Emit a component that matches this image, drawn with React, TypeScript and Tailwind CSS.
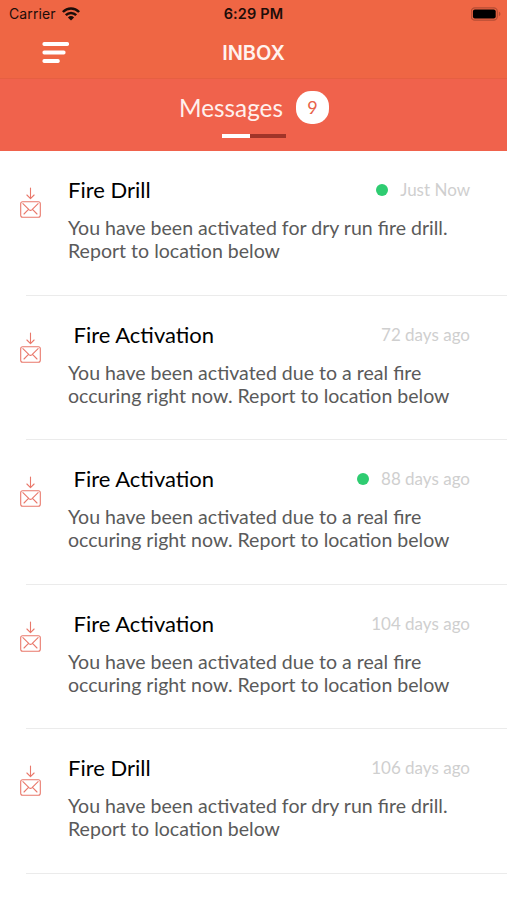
interface Message {
  id: number;
  title: string;
  body: string[];
  time: string;
  unread?: boolean;
  indent?: boolean;
}

const DRILL_BODY = ["You have been activated for dry run fire drill.", "Report to location below"];
const FIRE_BODY = ["You have been activated due to a real fire", "occuring right now. Report to location below"];

const messages: Message[] = [
  { id: 1, title: "Fire Drill", body: DRILL_BODY, time: "Just Now", unread: true },
  { id: 2, title: "Fire Activation", body: FIRE_BODY, time: "72 days ago", indent: true },
  { id: 3, title: "Fire Activation", body: FIRE_BODY, time: "88 days ago", unread: true, indent: true },
  { id: 4, title: "Fire Activation", body: FIRE_BODY, time: "104 days ago", indent: true },
  { id: 5, title: "Fire Drill", body: DRILL_BODY, time: "106 days ago" },
];

function WifiIcon() {
  return (
    <svg width="18" height="14" viewBox="0 0 18 14" fill="none" stroke="#1c0d09" strokeWidth="2.5">
      <path d="M0.9 5C5.5 0.2 12.5 0.2 17.1 5" />
      <path d="M3.8 8.2C6.8 5.2 11.2 5.2 14.2 8.2" />
      <path d="M5.9 10.4C7.8 8.6 10.2 8.6 12.1 10.4L9 13.6Z" fill="#1c0d09" stroke="none" />
    </svg>
  );
}

function BatteryIcon() {
  return (
    <svg width="31" height="14" viewBox="0 0 31 14" fill="none">
      <rect x="0.3" y="0.8" width="26" height="12.4" rx="3.6" stroke="#b54d34" strokeWidth="1.2" />
      <rect x="1.9" y="2.4" width="22.8" height="9.2" rx="2" fill="#000" />
      <path d="M27.9 4.8C29.9 5.4 29.9 8.6 27.9 9.2Z" fill="#b54d34" />
    </svg>
  );
}

function MenuIcon() {
  return (
    <svg width="28" height="22" viewBox="0 0 28 22" fill="#fff">
      <rect x="0.5" y="0" width="26.5" height="3.9" rx="1.6" />
      <rect x="0.5" y="8.5" width="23" height="3.9" rx="1.6" />
      <rect x="0.5" y="17" width="17.2" height="3.9" rx="1.6" />
    </svg>
  );
}

function InboxIcon() {
  return (
    <svg
      width="22"
      height="32"
      viewBox="0 0 22 32"
      fill="none"
      stroke="#e9786b"
      strokeWidth="1.1"
      strokeLinecap="round"
      strokeLinejoin="round"
    >
      <path d="M11.5 1V11.4M7.9 8L11.5 11.6L15.1 8" />
      <rect x="1.7" y="14.7" width="19.6" height="15.6" rx="2" />
      <path d="M3.9 16.7L10.2 22.8Q11.5 23.9 12.8 22.8L19.1 16.7M5 27L9 22.8M18 27L14 22.8" />
    </svg>
  );
}

function StatusBar() {
  return (
    <div className="grid h-[27px] grid-cols-3 items-center px-[7px] font-['Inter',sans-serif] text-[#1c0d09]">
      <div className="flex items-center gap-[6px] pl-[2px]">
        <span className="text-[14px] tracking-[0.1px]">Carrier</span>
        <WifiIcon />
      </div>
      <span className="text-center text-[14.5px] font-semibold tracking-[0.15px]">6:29 PM</span>
      <div className="-mr-[2px] flex justify-end">
        <BatteryIcon />
      </div>
    </div>
  );
}

function MessageRow({ message }: { message: Message }) {
  return (
    <li className="flex h-[144.6px] flex-col">
      <div className="flex flex-1">
        <div className="w-[68px] shrink-0 pl-[19px] pt-[36px]">
          <InboxIcon />
        </div>
        <div className="flex-1">
          <div className="flex items-center justify-between pr-[37px] pt-[25px]">
            <h2 className={message.indent ? "pl-[5.5px] text-[22px] leading-[28px] text-black" : "text-[22px] leading-[28px] text-black"}>
              {message.title}
            </h2>
            <div className="flex items-center gap-3">
              {message.unread && <span className="size-3 rounded-full bg-[#2ecc71]" />}
              <span className="text-[17px] leading-[28px] text-[#cfcfcf]">{message.time}</span>
            </div>
          </div>
          <p className="mt-[12px] whitespace-nowrap text-[19.56px] leading-[23px] text-[#5a5a5a]">
            {message.body[0]}
            <br />
            {message.body[1]}
          </p>
        </div>
      </div>
      <div className="ml-[26px] h-px bg-[#ebebeb]" />
    </li>
  );
}

export default function App() {
  return (
    <div className="h-[900px] w-[507px] overflow-hidden bg-white font-['Lato',sans-serif]">
      <header className="h-[79px] border-b border-[#e65f42] bg-[#ef6644]">
        <StatusBar />
        <div className="grid h-[51px] grid-cols-3 items-center">
          <div className="pl-[42px]">
            <MenuIcon />
          </div>
          <h1 className="text-center font-['Inter',sans-serif] text-[20px] font-semibold text-[#fff3ef]">INBOX</h1>
        </div>
      </header>

      <section className="flex h-[72px] flex-col items-center bg-[#f0624c] pt-[12px]">
        <div className="flex items-center gap-[13px] pl-px">
          <span className="text-[24.3px] leading-[33px] text-[#fff0ed]">Messages</span>
          <span className="flex size-[33px] items-center justify-center rounded-[15px] bg-white text-[18px] text-[#e8624a]">
            9
          </span>
        </div>
        <div className="mt-[10px] flex h-1 w-[64px] bg-[#a03428]">
          <div className="w-[28px] bg-white" />
        </div>
      </section>

      <ul>
        {messages.map((message) => (
          <MessageRow key={message.id} message={message} />
        ))}
      </ul>
    </div>
  );
}
